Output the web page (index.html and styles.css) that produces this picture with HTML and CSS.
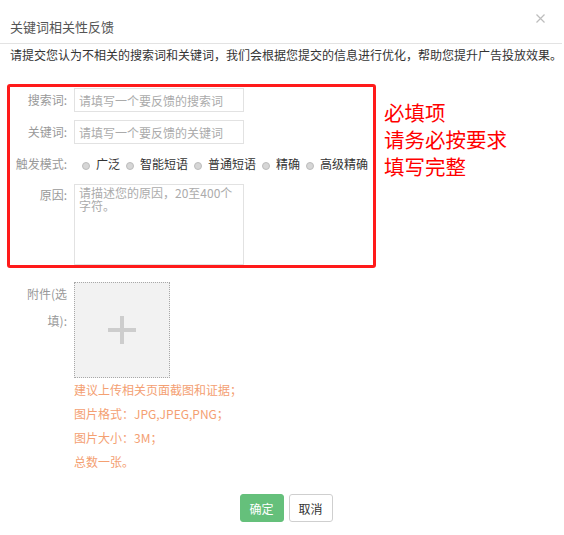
FILE: index.html
```html
<!DOCTYPE html>
<html lang="zh-CN">
<head>
<meta charset="utf-8">
<title>关键词相关性反馈</title>
<link rel="stylesheet" href="styles.css">
</head>
<body>
<div class="modal">
  <div class="header">
    <div class="title">关键词相关性反馈</div>
    <svg class="close" width="9" height="9" viewBox="0 0 9 9"><path d="M0.5 0.5L8.5 8.5M8.5 0.5L0.5 8.5" stroke="#bdbdbd" stroke-width="1.2" fill="none"/></svg>
  </div>
  <p class="desc">请提交您认为不相关的搜索词和关键词，我们会根据您提交的信息进行优化，帮助您提升广告投放效果。</p>

  <div class="form-row">
    <div class="required-box">
      <div class="field">
        <label class="label">搜索词:</label>
        <input class="input" type="text" placeholder="请填写一个要反馈的搜索词">
      </div>
      <div class="field field-gap">
        <label class="label">关键词:</label>
        <input class="input" type="text" placeholder="请填写一个要反馈的关键词">
      </div>
      <div class="field field-mode">
        <label class="label">触发模式:</label>
        <div class="radios">
          <span class="radio-item"><span class="radio"></span>广泛</span>
          <span class="radio-item"><span class="radio"></span>智能短语</span>
          <span class="radio-item"><span class="radio"></span>普通短语</span>
          <span class="radio-item"><span class="radio"></span>精确</span>
          <span class="radio-item"><span class="radio"></span>高级精确</span>
        </div>
      </div>
      <div class="field field-reason">
        <label class="label label-top">原因:</label>
        <textarea class="textarea" placeholder="请描述您的原因，20至400个字符。"></textarea>
      </div>
    </div>
    <div class="note">
      <div class="note-line">必填项</div>
      <div class="note-line">请务必按要求</div>
      <div class="note-line">填写完整</div>
    </div>
  </div>

  <div class="attach-row">
    <label class="label label-attach">附件(选填):</label>
    <div class="attach-col">
      <div class="upload"><span class="plus-h"></span><span class="plus-v"></span></div>
      <div class="tips">
        <div>建议上传相关页面截图和证据；</div>
        <div>图片格式：JPG,JPEG,PNG；</div>
        <div>图片大小：3M；</div>
        <div>总数一张。</div>
      </div>
    </div>
  </div>

  <div class="footer">
    <button class="btn btn-ok">确定</button>
    <button class="btn btn-cancel">取消</button>
  </div>
</div>
</body>
</html>
```

FILE: styles.css
```css
* { box-sizing: border-box; }
html, body { margin: 0; padding: 0; background: #fff; }
body {
  font-family: "Noto Sans CJK SC", "Microsoft YaHei", sans-serif;
  font-size: 12px;
  color: #333;
}
.modal { width: 562px; }
.header {
  display: flex;
  justify-content: space-between;
  align-items: flex-start;
  height: 44px;
  padding: 0 17px 0 10px;
  border-bottom: 1px solid #e3e3e3;
}
.title {
  margin-top: 17px;
  font-size: 13px;
  line-height: 20px;
  color: #555;
}
.close { margin-top: 14px; display: block; }
.desc {
  margin: 3px 0 0 10px;
  font-size: 12px;
  line-height: 16px;
  color: #333;
  white-space: nowrap;
}
.form-row {
  display: flex;
  align-items: flex-start;
  margin: 21px 0 0 7px;
}
.required-box {
  width: 369px;
  height: 184px;
  border: 3px solid #ff1a1a;
  border-radius: 3px;
  padding-top: 1px;
}
.field {
  display: flex;
  align-items: center;
}
.field-gap { margin-top: 8px; }
.field-mode { margin-top: 10px; height: 20px; }
.field-reason { margin-top: 10px; align-items: flex-start; }
.label {
  width: 57px;
  margin-right: 7px;
  text-align: right;
  color: #999;
  font-size: 12px;
  line-height: 20px;
  flex: none;
}
.label-top { margin-top: 1px; }
.input {
  width: 170px;
  height: 24px;
  border: 1px solid #e2e2e2;
  padding: 0 4px;
  font: inherit;
  font-size: 12px;
  outline: none;
}
.input::placeholder, .textarea::placeholder { color: #ababab; }
.radios {
  display: flex;
  align-items: center;
  gap: 6px;
  margin-left: 8px;
  line-height: 20px;
  color: #333;
}
.radio-item { display: flex; align-items: center; white-space: nowrap; }
.radio {
  width: 8px;
  height: 8px;
  border-radius: 50%;
  background: #d6d6d6;
  border: 1px solid #bcbcbc;
  margin: 4px 6px 0 0;
}
.textarea {
  width: 170px;
  height: 81px;
  border: 1px solid #e2e2e2;
  padding: 1px 4px 0 4px;
  font: inherit;
  font-size: 12px;
  line-height: 13px;
  resize: none;
  outline: none;
}
.note {
  margin: 16px 0 0 8px;
  font-family: "Liberation Sans", "Noto Sans CJK SC", sans-serif;
  font-size: 20.5px;
  line-height: 27px;
  color: #ff0000;
}
.note-line { height: 27px; white-space: nowrap; }
.attach-row {
  display: flex;
  align-items: flex-start;
  margin: 12px 0 0 10px;
}
.label-attach { line-height: 27px; }
.attach-col { margin-top: 2px; }
.upload {
  width: 96px;
  height: 96px;
  border: 1px dotted #a8a8a8;
  background: #f2f2f2;
  display: flex;
  align-items: center;
  justify-content: center;
  position: relative;
}
.plus-h { width: 28px; height: 4px; background: #cdcdcd; }
.plus-v { position: absolute; width: 4px; height: 28px; background: #cdcdcd; }
.tips {
  color: #f4a072;
  font-size: 12px;
  line-height: 24px;
  white-space: nowrap;
}
.footer {
  display: flex;
  justify-content: center;
  gap: 5px;
  margin-top: 20px;
  padding-left: 10px;
}
.btn {
  width: 44px;
  height: 28px;
  border-radius: 3px;
  font: inherit;
  font-size: 12px;
  padding: 0;
  cursor: pointer;
}
.btn-ok { background: #65c07b; border: 1px solid #65c07b; color: #fff; }
.btn-cancel { background: #fff; border: 1px solid #cfcfcf; color: #333; }
```
